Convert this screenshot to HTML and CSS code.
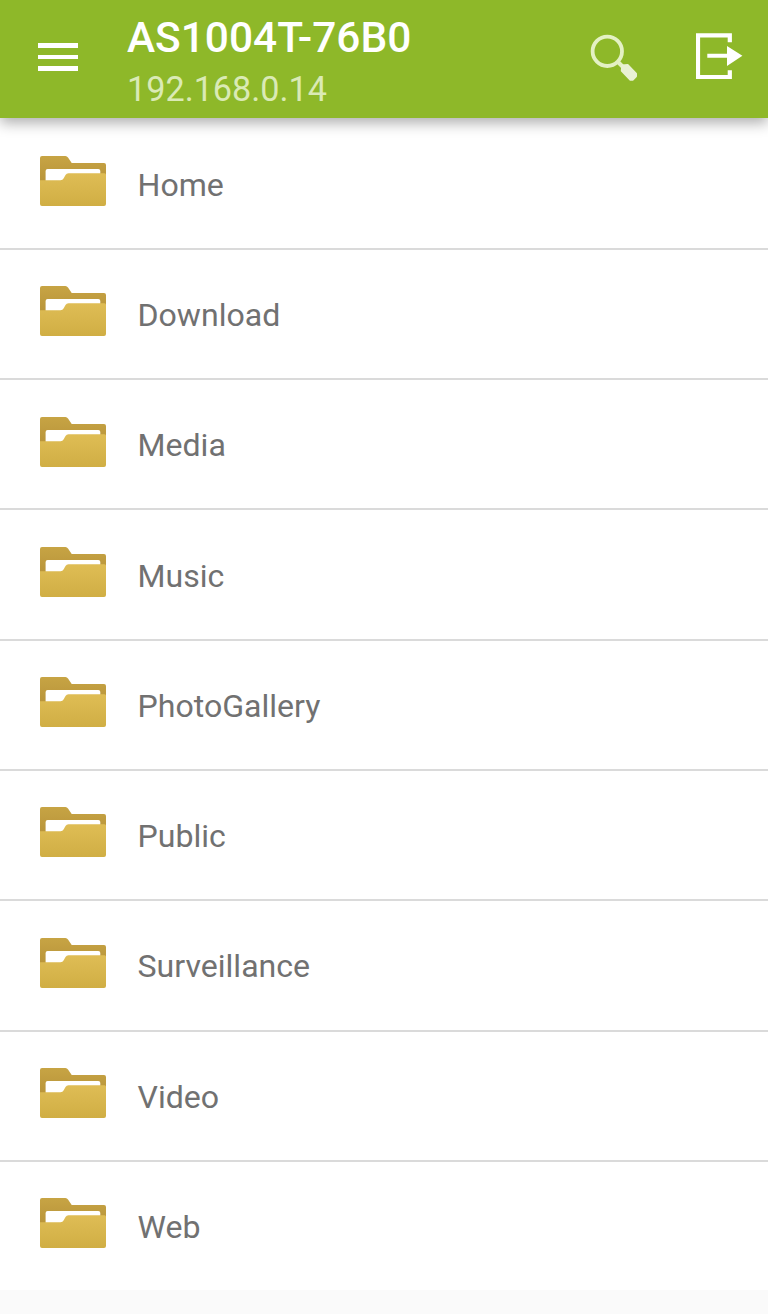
FILE: index.html
```
<!DOCTYPE html>
<html>
<head>
<meta charset="utf-8">
<meta name="viewport" content="width=device-width,minimum-scale=1.0,maximum-scale=1.0,user-scalable=no">
<title>AS1004T-76B0</title>
<link rel="stylesheet" href="styles.css">
</head>
<body>
	<svg class="defs" width="0" height="0">
		<defs>
			<linearGradient id="back" x1="0" y1="0" x2="0" y2="1">
				<stop offset="0" stop-color="#c7a444"/>
				<stop offset="1" stop-color="#b8943a"/>
			</linearGradient>
			<linearGradient id="front" x1="0" y1="0" x2="0" y2="1">
				<stop offset="0" stop-color="#dfbd55"/>
				<stop offset="1" stop-color="#d0ae44"/>
			</linearGradient>
		</defs>
		<symbol id="folder" viewBox="0 0 66 50">
			<path fill="url(#back)" d="M0 26V2Q0 0 2 0H25.5Q27 0 28 1.5L31.7 7H64Q66 7 66 9V26Z"/>
			<path fill="#fff" d="M5.6 25V15Q5.6 13 7.6 13H58.3Q60.3 13 60.3 15V25Z"/>
			<path fill="url(#front)" d="M0 24.2H20.5Q22.7 24.2 23.7 22.2L25.5 19Q26.5 17.2 28.5 17.2H64.5Q66 17.2 66 18.7V48Q66 50 64 50H2Q0 50 0 48Z"/>
		</symbol>
	</svg>
	<div class="bar">
		<a class="menu"><i></i><i></i><i></i></a>
		<div class="tit">
			<h1>AS1004T-76B0</h1>
			<p>192.168.0.14</p>
		</div>
		<a class="search">
			<svg width="48" height="48" viewBox="590 34 48 48">
				<circle cx="607.3" cy="51.3" r="14.7" fill="none" stroke="#e4f1c4" stroke-width="3.8"/>
				<path d="M617.5 61.5L624 68" stroke="#e4f1c4" stroke-width="4"/>
				<path d="M622.2 65.5L627.6 65L636 73.8V76.2L632.6 79.8H630.4L621.8 70.8Z" fill="#e9f1d4" stroke="#e9f1d4" stroke-width="2" stroke-linejoin="round"/>
			</svg>
		</a>
		<a class="out">
			<svg width="48" height="48" viewBox="696 33 48 48">
				<path d="M729.8 42.3V35.4H698V77H729.8V70.3" fill="none" stroke="#fff" stroke-width="4.2"/>
				<path d="M707.3 53.7H727V46L742.4 55.8L727 66V57.7H707.3Z" fill="#fff"/>
			</svg>
		</a>
	</div>
	<ul class="list">
		<li><svg class="ico"><use href="#folder"/></svg><span>Home</span></li>
		<li><svg class="ico"><use href="#folder"/></svg><span>Download</span></li>
		<li><svg class="ico"><use href="#folder"/></svg><span>Media</span></li>
		<li><svg class="ico"><use href="#folder"/></svg><span>Music</span></li>
		<li><svg class="ico"><use href="#folder"/></svg><span>PhotoGallery</span></li>
		<li><svg class="ico"><use href="#folder"/></svg><span>Public</span></li>
		<li><svg class="ico"><use href="#folder"/></svg><span>Surveillance</span></li>
		<li><svg class="ico"><use href="#folder"/></svg><span>Video</span></li>
		<li><svg class="ico"><use href="#folder"/></svg><span>Web</span></li>
	</ul>
</body>
</html>
```
FILE: styles.css
```
html,body{height:100%;margin:0}a{cursor:pointer}
body {
	background:#fafafa;
	font-family:Roboto,"Liberation Sans",sans-serif;
	overflow:hidden;
}
.defs {position:absolute}
.bar {
	position:relative;
	display:flex;
	height:117.5px;
	box-sizing:border-box;
	padding:0 24px 0 38.3px;
	background:#8eb829;
	box-shadow:0 5px 13px rgba(0,0,0,.32);
}
.bar svg {display:block}
.menu {
	width:40.2px;
	margin-top:43.2px;
}
.menu i {
	display:block;
	height:4.8px;
	margin-bottom:6.7px;
	background:#fff;
}
.tit {
	flex:1;
	margin-left:48.5px;
	padding-top:13px;
}
.tit h1 {
	margin:0;
	font-size:42.4px;
	font-weight:500;
	line-height:50px;
	color:#fff;
}
.tit p {
	margin:6px 0 0;
	font-size:34.2px;
	line-height:40px;
	color:#daeab5;
}
.search {margin:34px 58px 0 0}
.out {margin-top:33px}
.list {
	margin:0;
	padding:2.2px 0 0;
	list-style:none;
	background:#fff;
}
.list li {
	display:flex;
	height:130.28px;
	box-sizing:border-box;
	padding:36.4px 40px 0;
	border-bottom:2px solid #dadada;
}
.list li:last-child {border-color:#fff;height:128.1px}
.ico {
	width:66px;
	height:50px;
}
.list span {
	margin:9.7px 0 0 31.5px;
	font-size:32.1px;
	line-height:38px;
	color:#717171;
}
```
